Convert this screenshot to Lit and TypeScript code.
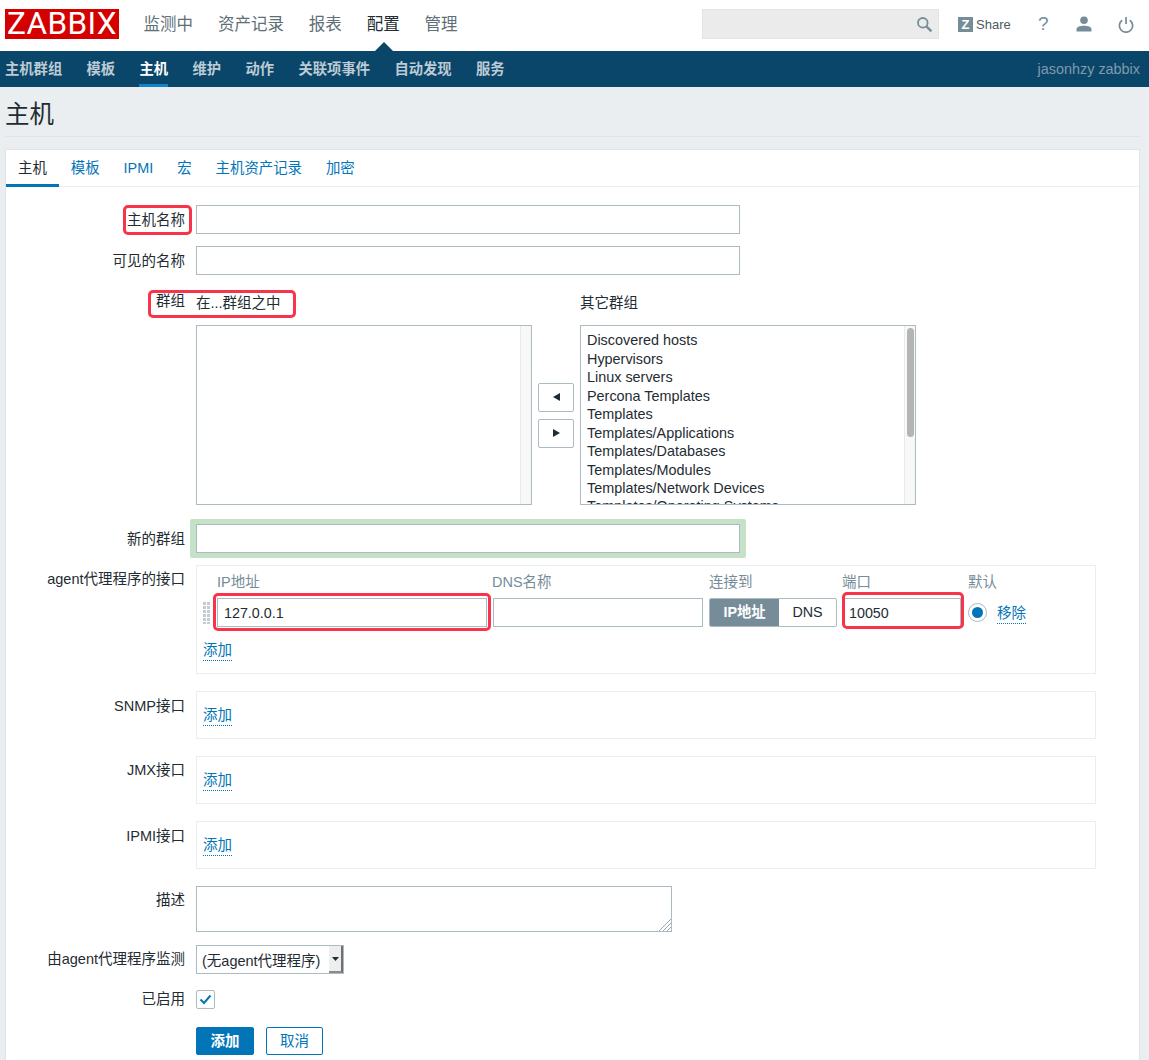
import { LitElement, html, css } from "lit";
import { customElement } from "lit/decorators.js";

const sans = css`"Liberation Sans", "Noto Sans CJK SC", sans-serif`;

@customElement("app-root")
export class AppRoot extends LitElement {
  static styles = css`
    :host { display: block; height: 1060px; overflow: hidden; background: #ebeef0; font-family: ${sans}; font-size: 14.5px; color: #1f2c33; }
    * { box-sizing: border-box; }
    .top { height: 51px; background: #fff; display: flex; align-items: flex-start; padding: 9px 0 0 5px; }
    .logo { width: 114px; height: 30px; background: #d40000; color: #fff; font-family: Roboto, sans-serif; font-weight: 400; font-size: 31.5px; line-height: 30px; text-align: center; letter-spacing: 0.4px; flex: none; }
    .main-nav { display: flex; gap: 24.9px; margin-left: 24.5px; font-size: 16.5px; line-height: 30px; color: #5f6f78; }
    .main-nav .on { color: #1f2c33; position: relative; }
    .main-nav .on::after { content: ""; position: absolute; left: 8px; top: 33px; border: 9px solid transparent; border-top: 0; border-bottom-color: #0a466a; }
    .top-right { margin-left: auto; display: flex; align-items: center; height: 30px; padding-right: 15px; }
    .search { width: 237px; height: 30px; background: #ebebeb; border: 1px solid #e3e3e3; display: flex; align-items: center; justify-content: flex-end; padding-right: 5px; }
    .share { display: flex; align-items: center; margin-left: 19px; font-size: 13px; color: #4d5a62; width: 53px; }
    .zbox { width: 15px; height: 15px; background: #768d99; color: #fff; font-weight: 700; font-size: 13px; line-height: 15px; text-align: center; margin-right: 3px; flex: none; }
    .q { margin-left: 27px; width: 12px; font-size: 19px; color: #768d99; line-height: 30px; }
    .u { margin-left: 26px; display: flex; }
    .p { margin-left: 26px; display: flex; }
    .sub { height: 36px; background: #0a466a; display: flex; padding: 0 9px 0 5px; line-height: 36px; color: #bccbd4; font-weight: 700; font-size: 14.3px; }
    .sub nav { display: flex; gap: 24.4px; }
    .sub .on { color: #fff; position: relative; }
    .sub .on::after { content: ""; position: absolute; left: -1px; right: 0; bottom: 0; height: 3px; background: #0f84c9; }
    .sub .who { margin-left: auto; font-weight: 400; font-size: 14.4px; color: #7f9bab; }
    .head { margin: 0 9px 0 5px; height: 50px; border-bottom: 1px solid #dfe4e7; display: flex; align-items: flex-start; padding: 13px 0 0 0; font-size: 24.5px; line-height: 30px; color: #1f2c33; }
    .card { margin: 12px 9px 0 5px; border: 1px solid #dfe4e7; border-bottom: 0; background: #fff; height: 920px; }
    .tabs { display: flex; height: 37px; border-bottom: 1px solid #ebeef0; line-height: 36px; color: #0275b8; font-size: 14.4px; }
    .tab { padding: 0 12px; }
    .tab.on { color: #1f2c33; position: relative; }
    .tab.on::after { content: ""; position: absolute; left: 0; right: 0; bottom: -1px; height: 3px; background: #0275b8; }
    .form { padding-top: 18px; display: grid; grid-template-columns: 179px 1fr; column-gap: 11px; }
    .lab { text-align: right; padding-top: 5px; line-height: 21px; position: relative; }
    .lab.t4 { padding-top: 4px; }
    .lab.chk { padding-top: 0; line-height: 19px; }
    .field { position: relative; min-width: 0; }
    .mb12 { margin-bottom: 12px; }
    .mb13 { margin-bottom: 13px; }
    .mb16 { margin-bottom: 16px; }
    .mb17 { margin-bottom: 17px; }
    .mb18 { margin-bottom: 18px; }
    .mb19 { margin-bottom: 19px; }
    input, textarea { display: block; font: inherit; font-size: 14.3px; color: #1f2c33; height: 29px; border: 1px solid #acbbc2; background: #fff; padding: 0 5px; outline: none; margin: 0; border-radius: 0; }
    .w544 { width: 544px; }
    .red { position: absolute; border: 3px solid #f8344a; border-radius: 5px; pointer-events: none; }
    .r-name { right: -7px; top: 0; width: 69px; height: 30px; }
    .r-group { right: -111px; top: 3px; width: 148px; height: 28px; }
    .r-ip { left: -4px; right: -4px; top: -5px; bottom: -4px; }
    .r-port { left: -1px; right: -3px; top: -6px; bottom: -2px; }
    .groups { display: grid; grid-template-columns: 336px 36px 336px; column-gap: 6px; grid-template-rows: 38px 180px; }
    .gh { line-height: 32px; align-self: start; }
    .list { border: 1px solid #acbbc2; position: relative; overflow: hidden; font-size: 14.4px; line-height: 18.45px; padding: 5.4px 6px 0; }
    .track { position: absolute; top: 0; right: 0; bottom: 0; width: 11px; background: #f8f8f8; border-left: 1px solid #eaeaea; }
    .thumb { position: absolute; top: 2px; left: 2px; width: 7px; height: 109px; background: #b4b4b4; border-radius: 4px; }
    .arrows { display: flex; flex-direction: column; gap: 7px; justify-content: center; grid-row: 2; grid-column: 2; }
    .arrows div { height: 29px; border: 1px solid #acbbc2; border-radius: 2px; display: flex; align-items: center; justify-content: center; background: #fff; }
    .green { margin: -5px -6px; width: 556px; padding: 5px 6px; height: 39px; background: #c5e2c8; border-radius: 2px; }
    .box { border: 1px solid #ebeef0; width: 900px; }
    .iface { height: 109px; padding: 6px 0 0 6px; display: grid; grid-template-columns: 8px 270px 210px 128px 118px auto; column-gap: 6px; grid-template-rows: 20px 29px; row-gap: 6px; justify-content: start; align-content: start; }
    .ih { color: #768d99; line-height: 20px; }
    .ih.dns { margin-left: -1px; }
    .ih.port { margin-left: -1px; }
    .ih.dflt { margin-left: 1px; }
    .grip { width: 8px; height: 22px; align-self: center; background-image: radial-gradient(circle at 1.5px 1.5px, #c3ccd1 1.5px, transparent 1.6px); background-size: 4px 4px; }
    .cell { position: relative; }
    .cell input { width: 100%; }
    .ip input { padding-left: 6px; }
    .seg { display: flex; height: 29px; border: 1px solid #acbbc2; border-radius: 2px; overflow: hidden; line-height: 27px; text-align: center; font-size: 14.3px; }
    .seg .s1 { width: 69px; background: #768d99; color: #fff; font-weight: 700; }
    .seg .s2 { flex: 1; }
    .def { display: flex; align-items: center; gap: 10px; margin-left: 1px; }
    .radio { width: 19px; height: 19px; border: 1px solid #acbbc2; border-radius: 50%; display: flex; align-items: center; justify-content: center; flex: none; }
    .radio i { display: block; width: 11px; height: 11px; background: #0275b8; border-radius: 50%; }
    a { color: #0275b8; text-decoration: none; border-bottom: 1px dotted #0275b8; display: inline-block; line-height: 19px; }
    .def a { margin-top: 2px; }
    .add { grid-column: 1 / -1; margin-top: 8px; align-self: start; justify-self: start; }
    .simple { height: 48px; display: flex; align-items: center; padding: 2px 0 0 6px; }
    .ta { width: 476px; height: 46px; position: relative; }
    textarea { width: 476px; height: 46px; resize: none; overflow: hidden; }
    .hatch { position: absolute; right: 1px; bottom: 1px; display: block; }
    .sel { width: 148px; height: 29px; border: 1px solid #acbbc2; display: flex; line-height: 30px; font-size: 14.5px; padding-left: 5px; justify-content: space-between; }
    .sel b { width: 14px; flex: none; background: #eee; border-right: 2px solid #707070; border-bottom: 2px solid #8a8a8a; display: flex; align-items: center; justify-content: center; }
    .check { width: 19px; height: 19px; border: 1px solid #acbbc2; border-radius: 2px; display: flex; align-items: center; justify-content: center; }
    .btns { display: flex; gap: 12px; }
    .btn { height: 28px; line-height: 26px; border: 1px solid #0275b8; border-radius: 2px; text-align: center; color: #0275b8; }
    .btn.pri { width: 58px; background: #0275b8; color: #fff; font-weight: 700; }
    .btn.sec { width: 57px; }
  `;

  render() {
    const others = ["Discovered hosts", "Hypervisors", "Linux servers", "Percona Templates", "Templates", "Templates/Applications", "Templates/Databases", "Templates/Modules", "Templates/Network Devices", "Templates/Operating Systems"];
    return html`
      <div class="top">
        <div class="logo">ZABBIX</div>
        <div class="main-nav"><span>监测中</span><span>资产记录</span><span>报表</span><span class="on">配置</span><span>管理</span></div>
        <div class="top-right">
          <div class="search">
            <svg width="17" height="17" viewBox="0 0 17 17" fill="none" stroke="#768d99"><circle cx="6.8" cy="6.8" r="4.8" stroke-width="1.8"/><path d="M10.4 10.4l5 5" stroke-width="2.4"/></svg>
          </div>
          <div class="share"><span class="zbox">Z</span>Share</div>
          <span class="q">?</span>
          <span class="u"><svg width="16" height="16" viewBox="0 0 16 16" fill="#768d99"><circle cx="8" cy="4.2" r="3.8"/><path d="M0.5 15.5v-2.2c0-2.6 3.6-3.6 7.5-3.6s7.5 1 7.5 3.6v2.2z"/></svg></span>
          <span class="p"><svg width="16" height="17" viewBox="0 0 16 17" fill="none" stroke="#768d99" stroke-width="1.7"><path d="M8 1v7"/><path d="M4.2 4.2a6.6 6.6 0 1 0 7.6 0"/></svg></span>
        </div>
      </div>
      <div class="sub">
        <nav><span>主机群组</span><span>模板</span><span class="on">主机</span><span>维护</span><span>动作</span><span>关联项事件</span><span>自动发现</span><span>服务</span></nav>
        <span class="who">jasonhzy zabbix</span>
      </div>
      <div class="head">主机</div>
      <div class="card">
        <div class="tabs"><span class="tab on">主机</span><span class="tab">模板</span><span class="tab">IPMI</span><span class="tab">宏</span><span class="tab">主机资产记录</span><span class="tab">加密</span></div>
        <div class="form">
          <div class="lab mb12">主机名称<span class="red r-name"></span></div>
          <div class="field mb12"><input class="w544" /></div>

          <div class="lab mb12">可见的名称</div>
          <div class="field mb12"><input class="w544" /></div>

          <div class="lab t4 mb19"><span>群组</span><span class="red r-group"></span></div>
          <div class="field mb19">
            <div class="groups">
              <div class="gh">在...群组之中</div><div></div><div class="gh">其它群组</div>
              <div class="list"><div class="track"></div></div>
              <div class="arrows">
                <div><svg width="7" height="8" viewBox="0 0 7 8" fill="#1f2c33"><path d="M7 0v8L0 4z"/></svg></div>
                <div><svg width="7" height="8" viewBox="0 0 7 8" fill="#1f2c33"><path d="M0 0v8l7-4z"/></svg></div>
              </div>
              <div class="list">${others.map((o) => html`<div>${o}</div>`)}<div class="track"><div class="thumb"></div></div></div>
            </div>
          </div>

          <div class="lab mb12">新的群组</div>
          <div class="field mb12"><div class="green"><input class="w544" /></div></div>

          <div class="lab t4 mb17">agent代理程序的接口</div>
          <div class="field mb17">
            <div class="box iface">
              <span></span><span class="ih">IP地址</span><span class="ih dns">DNS名称</span><span class="ih">连接到</span><span class="ih port">端口</span><span class="ih dflt">默认</span>
              <div class="grip"></div>
              <div class="cell ip"><input value="127.0.0.1" /><span class="red r-ip"></span></div>
              <div class="cell"><input /></div>
              <div class="seg"><span class="s1">IP地址</span><span class="s2">DNS</span></div>
              <div class="cell"><input value="10050" /><span class="red r-port"></span></div>
              <div class="def"><span class="radio"><i></i></span><a>移除</a></div>
              <a class="add">添加</a>
            </div>
          </div>

          <div class="lab mb17">SNMP接口</div>
          <div class="field mb17"><div class="box simple"><a>添加</a></div></div>

          <div class="lab t4 mb17">JMX接口</div>
          <div class="field mb17"><div class="box simple"><a>添加</a></div></div>

          <div class="lab mb17">IPMI接口</div>
          <div class="field mb17"><div class="box simple"><a>添加</a></div></div>

          <div class="lab t4 mb13">描述</div>
          <div class="field mb13"><div class="ta"><textarea></textarea><svg class="hatch" width="12" height="12" viewBox="0 0 12 12" stroke="#9aa5ab" stroke-width="1"><path d="M0 12L12 0M4 12l8-8M8 12l4-4"/></svg></div></div>

          <div class="lab t4 mb16">由agent代理程序监测</div>
          <div class="field mb16"><div class="sel"><span>(无agent代理程序)</span><b><svg width="7" height="4" viewBox="0 0 7 4" fill="#1f2c33"><path d="M0 0h7L3.5 4z"/></svg></b></div></div>

          <div class="lab chk mb18">已启用</div>
          <div class="field mb18"><div class="check"><svg width="13" height="11" viewBox="0 0 13 11" fill="none" stroke="#0275b8" stroke-width="2"><path d="M1.5 5.5l3.5 3.5 6.5-7.5"/></svg></div></div>

          <div></div>
          <div class="field btns"><div class="btn pri">添加</div><div class="btn sec">取消</div></div>
        </div>
      </div>
    `;
  }
}
